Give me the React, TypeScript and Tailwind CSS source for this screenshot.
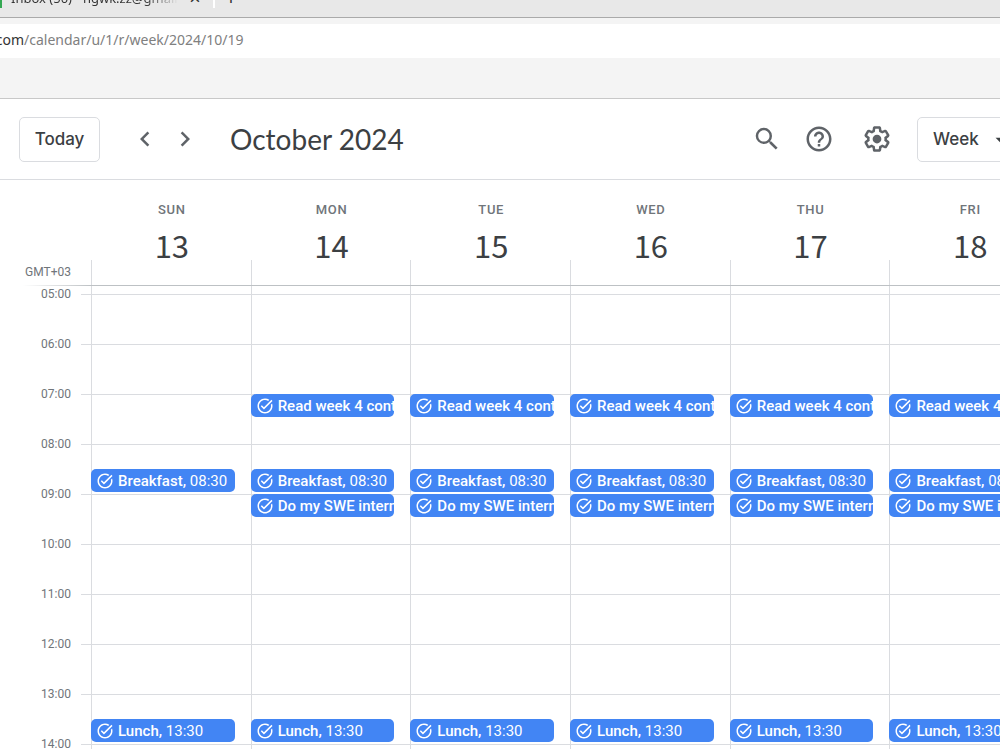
import { MdArrowDropDown, MdChevronLeft, MdChevronRight, MdHelpOutline, MdSearch, MdTaskAlt } from "react-icons/md";

type CalendarEvent = { title: string; time?: string; row: string };
type Day = { name: string; date: number; events: CalendarEvent[] };

const read: CalendarEvent = { title: "Read week 4 content", row: "row-start-6" };
const breakfast: CalendarEvent = { title: "Breakfast", time: "08:30", row: "row-start-9" };
const internship: CalendarEvent = { title: "Do my SWE internship", row: "row-start-10" };
const lunch: CalendarEvent = { title: "Lunch", time: "13:30", row: "row-start-19" };
const weekday = [read, breakfast, internship, lunch];

const days: Day[] = [
  { name: "SUN", date: 13, events: [breakfast, lunch] },
  { name: "MON", date: 14, events: weekday },
  { name: "TUE", date: 15, events: weekday },
  { name: "WED", date: 16, events: weekday },
  { name: "THU", date: 17, events: weekday },
  { name: "FRI", date: 18, events: weekday },
];

const hours = ["05:00", "06:00", "07:00", "08:00", "09:00", "10:00", "11:00", "12:00", "13:00", "14:00"];

const hourRows = [
  "row-start-2",
  "row-start-4",
  "row-start-6",
  "row-start-8",
  "row-start-10",
  "row-start-12",
  "row-start-14",
  "row-start-16",
  "row-start-18",
  "row-start-20",
];

function GearIcon() {
  return (
    <svg viewBox="0 0 24 24" className="size-[30px]" fill="currentColor" aria-hidden="true">
      <path d="M13.85 22.25h-3.7c-.74 0-1.36-.54-1.45-1.27l-.27-1.89c-.27-.14-.53-.29-.79-.46l-1.8.72c-.7.26-1.47-.03-1.81-.65L2.2 15.53c-.35-.66-.2-1.44.36-1.88l1.53-1.19c-.01-.15-.02-.3-.02-.46 0-.15.01-.31.02-.46l-1.52-1.19c-.59-.45-.74-1.26-.37-1.88l1.85-3.19c.34-.62 1.11-.9 1.79-.63l1.81.73c.26-.17.52-.32.78-.46l.27-1.91c.09-.7.71-1.25 1.44-1.25h3.7c.74 0 1.36.54 1.45 1.27l.27 1.89c.27.14.53.29.79.46l1.8-.72c.71-.26 1.48.03 1.82.65l1.84 3.18c.36.66.2 1.44-.36 1.88l-1.52 1.19c.01.15.02.3.02.46s-.01.31-.02.46l1.52 1.19c.56.45.72 1.23.37 1.86l-1.86 3.22c-.34.62-1.11.9-1.8.63l-1.8-.72c-.26.17-.52.32-.78.46l-.27 1.91c-.1.68-.72 1.22-1.46 1.22zm-3.23-2h2.76l.37-2.55.53-.22c.44-.18.88-.44 1.34-.78l.45-.34 2.38.96 1.38-2.4-2.03-1.58.07-.56c.03-.26.06-.51.06-.78s-.03-.53-.06-.78l-.07-.56 2.03-1.58-1.39-2.4-2.39.96-.45-.35c-.42-.32-.87-.58-1.33-.77l-.52-.22-.37-2.55h-2.76l-.37 2.55-.53.21c-.44.19-.88.44-1.34.79l-.45.33-2.38-.95-1.39 2.39 2.03 1.58-.07.56a7 7 0 0 0-.06.79c0 .26.02.53.06.78l.07.56-2.03 1.58 1.38 2.4 2.39-.96.45.35c.43.33.86.58 1.33.77l.53.22.38 2.55z" />
      <circle cx="12" cy="12" r="3.5" />
    </svg>
  );
}

function BrowserChrome() {
  return (
    <div className="shrink-0 border-b border-[#c8c8c8] bg-[#f4f4f4] font-['Noto_Sans',sans-serif]">
      <div className="flex h-[18px] overflow-hidden border-b border-[#aaaaaa] bg-[#e8e8e8] text-[#333333]">
        <div className="-mt-3 flex h-5 items-center">
          <span className="h-5 w-0.5 bg-[#34a853]" />
          <span className="ml-[9px] w-[167px] overflow-hidden bg-linear-to-r from-[#333333] from-80% to-[#e8e8e8] bg-clip-text text-[13px] leading-5 whitespace-nowrap text-transparent">
            Inbox (50) - ngwk.zz@gmail.c
          </span>
          <button type="button" aria-label="Close tab" className="ml-[11px] w-3 text-xl leading-5">
            ×
          </button>
          <span className="ml-3 h-5 w-0.5 bg-white" />
          <button type="button" aria-label="New tab" className="ml-2.5 w-3 text-xl leading-5">
            +
          </button>
        </div>
      </div>
      <div className="mt-1.5 mb-10 flex h-[34px] overflow-hidden bg-white text-sm leading-8">
        <span className="-ml-2 text-[#333333]">.com</span>
        <input
          aria-label="Address"
          className="h-8 min-w-0 flex-1 bg-transparent text-[#808080] outline-none"
          defaultValue="/calendar/u/1/r/week/2024/10/19"
        />
      </div>
    </div>
  );
}

function Toolbar() {
  return (
    <header className="shrink-0 overflow-hidden border-b border-[#dadce0]">
      <div className="flex h-20 w-[104%] items-center pr-3 pl-[19px] font-[Inter,sans-serif] text-[#3c4043]">
        <button type="button" className="h-[45px] w-[81px] shrink-0 rounded-[5px] border border-[#dadce0] pt-0.5 text-[17px] font-medium">
          Today
        </button>
        <div className="ml-[25px] flex shrink-0 text-[#5f6368]">
          <button type="button" aria-label="Previous week" className="flex size-10 items-center justify-center">
            <MdChevronLeft className="size-[30px]" />
          </button>
          <button type="button" aria-label="Next week" className="flex size-10 items-center justify-center">
            <MdChevronRight className="size-[30px]" />
          </button>
        </div>
        <h1 className="ml-[25px] shrink-0 font-[Lato,sans-serif] text-[28px] leading-9">October 2024</h1>
        <div className="ml-auto flex shrink-0 items-center text-[#5f6368]">
          <button type="button" aria-label="Search" className="mr-[22px]">
            <MdSearch className="size-[30px]" />
          </button>
          <button type="button" aria-label="Support" className="mr-7">
            <MdHelpOutline className="size-[30px]" />
          </button>
          <button type="button" aria-label="Settings" className="mr-[25px]">
            <GearIcon />
          </button>
        </div>
        <div className="relative h-[45px] w-[111px] shrink-0">
          <select
            aria-label="View"
            defaultValue="Week"
            className="size-full appearance-none rounded-[5px] border border-[#dadce0] bg-white pt-0.5 pl-[15px] text-[17px] font-medium"
          >
            <option>Week</option>
          </select>
          <MdArrowDropDown className="pointer-events-none absolute top-2.5 left-[71px] size-[26px]" />
        </div>
      </div>
    </header>
  );
}

function EventChip({ event }: { event: CalendarEvent }) {
  return (
    <button
      type="button"
      className={`${event.row} col-start-1 mr-4 flex h-[23px] items-center overflow-hidden rounded-[5px] bg-[#4285f4] pl-[5px] text-left text-[15px] whitespace-nowrap text-white`}
    >
      <MdTaskAlt className="size-[18px] shrink-0" />
      <span className="ml-1 pt-0.5 font-medium">
        {event.title}
        {event.time && (
          <>
            , <span className="font-normal">{event.time}</span>
          </>
        )}
      </span>
    </button>
  );
}

function DayHeaders() {
  return (
    <div className="shrink-0">
      <div className="flex h-[105px]">
        <div className="flex w-[91px] shrink-0 items-end justify-end pr-5 pb-[5px] text-xs text-[#70757a]">GMT+03</div>
        <div className="min-w-0 flex-1">
          <div className="grid h-full w-[105.4%] grid-cols-6">
            {days.map((day) => (
              <div key={day.name} className="pt-5 text-center">
                <div className="pl-0.5 text-[13px] leading-5 font-medium tracking-wider text-[#70757a]">{day.name}</div>
                <div className="h-10 pl-0.5 font-['Noto_Sans_CJK_SC',sans-serif] text-[31px] leading-[50px] text-[#3c4043]">
                  {day.date}
                </div>
                <div className="h-[25px] border-l border-[#dadce0]" />
              </div>
            ))}
          </div>
        </div>
      </div>
      <div className="flex h-px">
        <div className="w-[91px] shrink-0 bg-linear-to-r from-white from-25% to-[#bdc1c4]" />
        <div className="flex-1 bg-[#bdc1c4]" />
      </div>
    </div>
  );
}

function WeekGrid() {
  return (
    <div className="flex min-h-0 flex-1 overflow-hidden">
      <div className="w-[81px] shrink-0 pr-2.5 text-right text-xs leading-4 text-[#70757a]">
        {hours.map((hour) => (
          <div key={hour} className="h-[50px]">
            {hour}
          </div>
        ))}
      </div>
      <div className="w-2.5 shrink-0 pt-2">
        {hours.map((hour) => (
          <div key={hour} className="h-[50px] border-t border-[#dadce0]" />
        ))}
      </div>
      <div className="min-w-0 flex-1">
        <div className="grid w-[105.4%] grid-cols-6">
          {days.map((day) => (
            <div key={day.name} className="grid auto-rows-[25px] grid-cols-1 grid-rows-[8px]">
              <div className="col-start-1 row-span-21 row-start-1 border-l border-[#dadce0]" />
              {hourRows.map((row) => (
                <div key={row} className={`${row} col-start-1 row-span-2 border-t border-[#dadce0]`} />
              ))}
              {day.events.map((event) => (
                <EventChip key={event.title} event={event} />
              ))}
            </div>
          ))}
        </div>
      </div>
    </div>
  );
}

export default function App() {
  return (
    <div className="flex h-screen flex-col overflow-hidden bg-white font-[Roboto,sans-serif]">
      <BrowserChrome />
      <Toolbar />
      <main className="flex min-h-0 flex-1 flex-col overflow-hidden">
        <DayHeaders />
        <WeekGrid />
      </main>
    </div>
  );
}
